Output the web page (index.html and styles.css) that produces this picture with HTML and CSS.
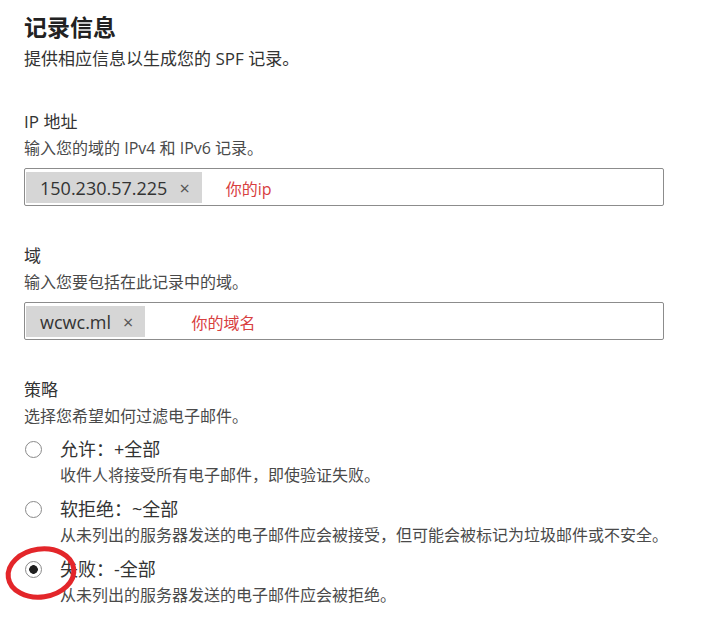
FILE: index.html
```html
<!DOCTYPE html>
<html lang="zh-CN">

<head>
    <meta charset="UTF-8">
    <meta name="viewport" content="width=device-width, initial-scale=1.0">
    <title>记录信息</title>
    <link rel="stylesheet" href="styles.css">
</head>

<body>
    <form class="record-form">
        <div class="form-head">
            <h1>记录信息</h1>
            <p class="subtitle">提供相应信息以生成您的 SPF 记录。</p>
        </div>

        <div class="field">
            <label class="field-label">IP 地址</label>
            <p class="field-desc">输入您的域的 IPv4 和 IPv6 记录。</p>
            <div class="tag-input">
                <span class="tag">150.230.57.225<span class="tag-close">×</span></span>
                <span class="note note-ip">你的ip</span>
            </div>
        </div>

        <div class="field">
            <label class="field-label">域</label>
            <p class="field-desc">输入您要包括在此记录中的域。</p>
            <div class="tag-input">
                <span class="tag">wcwc.ml<span class="tag-close">×</span></span>
                <span class="note note-domain">你的域名</span>
            </div>
        </div>

        <div class="field">
            <label class="field-label">策略</label>
            <p class="field-desc">选择您希望如何过滤电子邮件。</p>

            <div class="options">
                <label class="option">
                    <input type="radio" name="policy" value="pass">
                    <span class="option-title">允许：+全部</span>
                    <span class="option-desc">收件人将接受所有电子邮件，即使验证失败。</span>
                </label>
                <label class="option">
                    <input type="radio" name="policy" value="softfail">
                    <span class="option-title">软拒绝：~全部</span>
                    <span class="option-desc">从未列出的服务器发送的电子邮件应会被接受，但可能会被标记为垃圾邮件或不安全。</span>
                </label>
                <label class="option">
                    <input type="radio" name="policy" value="fail" checked>
                    <span class="option-title">失败：-全部</span>
                    <span class="option-desc">从未列出的服务器发送的电子邮件应会被拒绝。</span>
                    <!-- red marker circled around the chosen option -->
                    <svg class="marker" width="76" height="60" viewBox="0 0 76 60">
                        <ellipse cx="38" cy="30" rx="33" ry="24" fill="none" stroke="#e3262a" stroke-width="5"
                            transform="rotate(-8 38 30)" />
                    </svg>
                </label>
            </div>
        </div>
    </form>
</body>

</html>
```

FILE: styles.css
```css
body {
    margin: 0;
    padding: 0;
    background: #fff;
    font-family: "Open Sans", "Noto Sans CJK SC", sans-serif;
    color: #333;
}

.record-form {
    display: flex;
    flex-direction: column;
    gap: 37px;
    padding: 12px 0 0 24px;
}

h1 {
    margin: 0;
    font-size: 23px;
    line-height: 30px;
    font-weight: bold;
    color: #222;
}

.subtitle {
    margin: 4px 0 0;
    font-size: 17px;
    line-height: 26px;
    color: #333;
}

.field {
    display: flex;
    flex-direction: column;
}

.field-label {
    font-size: 17px;
    line-height: 26px;
    color: #333;
}

.field-desc {
    margin: 0;
    font-size: 16px;
    line-height: 26px;
    color: #4a4a4a;
}

.tag-input {
    display: flex;
    align-items: center;
    margin-top: 7px;
    width: 640px;
    height: 38px;
    box-sizing: border-box;
    padding: 3px 2px 2px 1px;
    border: 1px solid #8c8c8c;
    border-radius: 2px;
}

.tag {
    display: flex;
    align-items: center;
    height: 31px;
    padding: 0 12px 0 14px;
    background: #d6d6d6;
    font-size: 18px;
    color: #333;
}

.tag-close {
    margin-left: 12px;
    font-size: 18px;
    color: #555;
}

.note {
    font-size: 16px;
    color: #d8403f;
}

.note-ip {
    margin-left: 24px;
}

.note-domain {
    margin-left: 46px;
}

.options {
    display: flex;
    flex-direction: column;
    gap: 8px;
    margin-top: 7px;
}

.option {
    position: relative;
    display: grid;
    grid-template-columns: 36px 1fr;
    align-items: center;
    white-space: nowrap;
}

.option input {
    appearance: none;
    -webkit-appearance: none;
    margin: 0 0 0 1px;
    width: 17px;
    height: 17px;
    border: 1px solid #8a8a8a;
    border-radius: 50%;
    background: #fff;
}

.option input:checked {
    background: radial-gradient(circle, #1f1f1f 0 4px, #fff 4.6px);
}

.option-title {
    font-size: 18px;
    line-height: 26px;
    color: #333;
}

.option-desc {
    grid-column: 2;
    font-size: 16px;
    line-height: 26px;
    color: #4a4a4a;
}

.marker {
    position: absolute;
    left: -21px;
    top: -13px;
}
```
